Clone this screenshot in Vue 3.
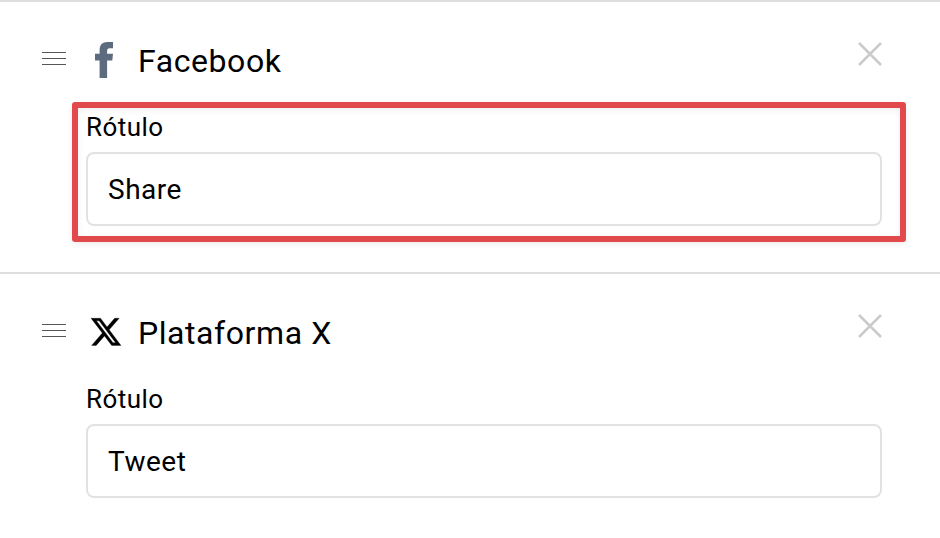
<template>
  <div class="network-list">
    <section v-for="network in networks" :key="network.id" class="network">
      <header class="network-header">
        <!-- Drag handle -->
        <svg class="handle" viewBox="0 0 24 14">
          <path d="M0 1.5h24M0 7.5h24M0 13.5h24" />
        </svg>

        <span class="network-icon">
          <svg v-if="network.id === 'facebook'" class="icon-facebook" viewBox="0 0 18 36">
            <path d="M4.6 36V18.4H0v-6.6h4.6V8.4C4.6 2.7 7.3 0 12.6 0H18v6.2h-3.2c-2 0-2.7.8-2.7 2.6v3H18l-.7 6.6h-5.2V36z" />
          </svg>
          <svg v-else class="icon-x" viewBox="0 0 24 22">
            <path d="M18.9 0h3.68l-8.04 9.19L24 21.7h-7.41l-5.8-7.59-6.64 7.59H.47l8.6-9.83L0 0h7.59l5.24 6.93zM17.61 19.5h2.04L6.49 2.09H4.3z" />
          </svg>
        </span>

        <h2 class="network-name">{{ network.name }}</h2>

        <button class="remove" type="button" aria-label="Remover">
          <svg viewBox="0 0 24 24">
            <path d="M1 1l22 22M23 1L1 23" />
          </svg>
        </button>
      </header>

      <div class="field" :class="{ 'field--highlight': network.highlight }">
        <label class="field-label" :for="network.id">Rótulo</label>
        <input :id="network.id" v-model="network.label" class="field-input" type="text" />
      </div>
    </section>
  </div>
</template>

<script setup>
import { reactive } from 'vue'

const networks = reactive([
  { id: 'facebook', name: 'Facebook', label: 'Share', highlight: true },
  { id: 'x', name: 'Plataforma X', label: 'Tweet', highlight: false },
])
</script>

<style>
body {
  margin: 0;
  background: #fff;
}
</style>

<style scoped>
.network-list {
  height: 538px;
  overflow: hidden;
  font-family: Roboto, "Liberation Sans", sans-serif;
  color: #000;
  background: #fff;
}

.network {
  box-sizing: border-box;
  height: 272px;
  padding: 40px 34px 0 42px;
  border-top: 2px solid #dedede;
}

.network-header {
  display: flex;
  align-items: flex-start;
  height: 60px;
  padding-right: 24px;
}

.handle {
  width: 24px;
  height: 14px;
  margin-top: 9px;
  fill: none;
  stroke: #555;
  stroke-width: 1;
}

.network-icon {
  display: flex;
  width: 32px;
  height: 36px;
  margin: 0 15px 0 25px;
}

.icon-facebook {
  width: 18px;
  height: 36px;
  margin-left: 4px;
  fill: #5d6b7e;
}

.icon-x {
  width: 30px;
  height: 28px;
  margin-top: 4px;
  stroke: #000;
  stroke-width: 0.25;
  overflow: visible;
}

.network-name {
  margin: 0;
  font-size: 32px;
  line-height: 38px;
  font-weight: 400;
  letter-spacing: 0.57px;
}

.remove {
  display: flex;
  margin: 0 0 0 auto;
  padding: 0;
  border: 0;
  background: none;
}

.remove svg {
  width: 24px;
  height: 24px;
  fill: none;
  stroke: #cacaca;
  stroke-width: 2.5;
}

.field {
  display: flex;
  flex-direction: column;
  box-sizing: border-box;
  height: 140px;
  margin-left: 30px;
  border: 6px solid transparent;
  border-radius: 3px;
  padding: 4px 18px 0 8px;
}

.field--highlight {
  border-color: #e2494c;
  box-shadow: 0 2px 6px rgba(0, 0, 0, 0.08), inset 0 2px 6px rgba(0, 0, 0, 0.07);
}

.field-label {
  height: 40px;
  font-size: 26px;
  line-height: 30px;
  letter-spacing: 0.45px;
}

.field-input {
  box-sizing: border-box;
  width: 100%;
  height: 74px;
  padding: 0 20px;
  border: 2px solid #e2e2e2;
  border-radius: 8px;
  background: #fff;
  font: inherit;
  font-size: 28px;
  letter-spacing: 0.5px;
  color: #000;
  outline: none;
}
</style>
